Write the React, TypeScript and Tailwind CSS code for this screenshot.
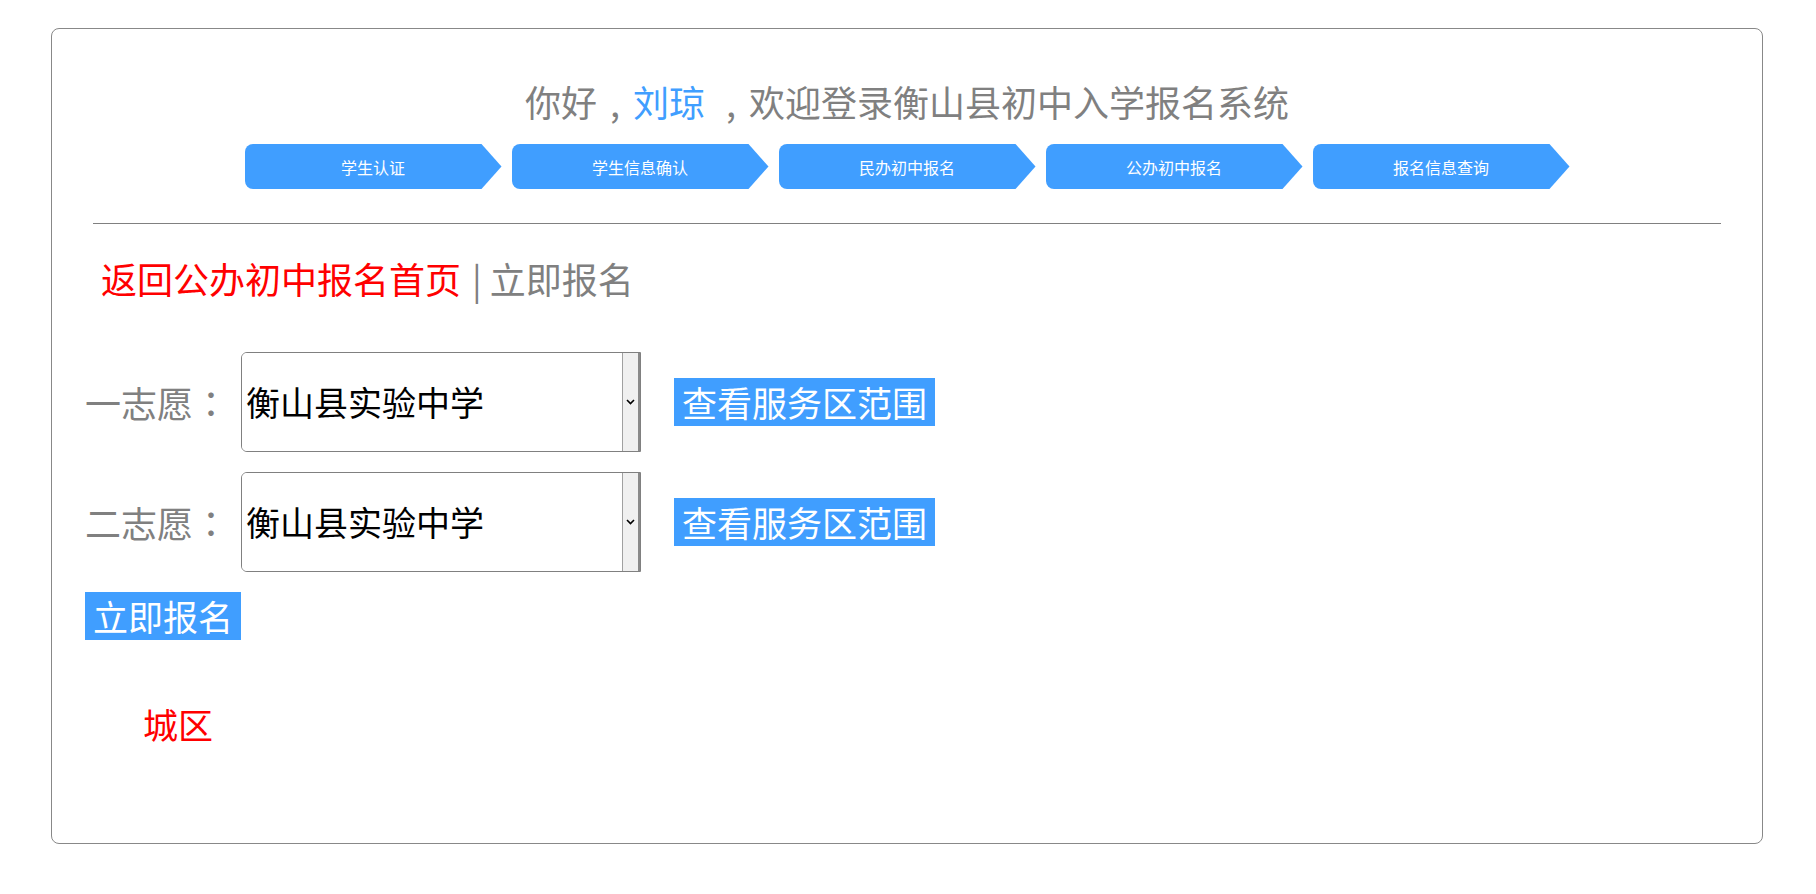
const steps = ['学生认证', '学生信息确认', '民办初中报名', '公办初中报名', '报名信息查询']

// full-width comma with the mark centred at the baseline, as in the reference font
function Comma() {
  return <span className="inline-block w-[1em] text-center">,</span>
}

// centred full-width colon
function Colon() {
  return <span className="font-['Noto_Sans_CJK_TC',sans-serif]">：</span>
}

function StepTab({ label }: { label: string }) {
  return (
    <div className="flex h-[45px] w-[257px] items-center justify-center rounded-l-[8px] bg-[#409eff] text-[16px] leading-[16px] text-white [clip-path:polygon(0_0,calc(100%_-_20px)_0,100%_50%,calc(100%_-_20px)_100%,0_100%)]">
      {label}
    </div>
  )
}

function SchoolSelect() {
  return (
    <div className="flex h-[100px] w-[400px] overflow-hidden rounded-l-[6px] border border-[#808080]">
      <select
        defaultValue="衡山县实验中学"
        className="h-full flex-1 appearance-none bg-white pl-[4px] text-[34px] leading-[34px] text-black outline-none"
      >
        <option>衡山县实验中学</option>
      </select>
      {/* Dropdown arrow box */}
      <div className="flex w-[18px] items-center justify-center border-l border-[#a0a0a0] border-r-2 border-r-[#8a8a8a] bg-[#f0f0f0]">
        <svg width="9" height="6" viewBox="0 0 9 6">
          <path d="M1 1l3.5 3.5L8 1" fill="none" stroke="#000" strokeWidth="1.6" />
        </svg>
      </div>
    </div>
  )
}

function ChoiceRow({ label }: { label: string }) {
  return (
    <div className="flex items-center">
      <span className="w-[156px] text-[36px] leading-[36px] text-[#808080]">
        {label}
        <Colon />
      </span>
      <SchoolSelect />
      <button className="ml-[33px] h-[48px] bg-[#409eff] px-[8px] text-[35px] leading-[48px] text-white">
        查看服务区范围
      </button>
    </div>
  )
}

export default function App() {
  return (
    <div className="min-h-[894px] bg-white pt-[28px] font-['Noto_Sans_CJK_SC','Noto_Sans',sans-serif]">
      <div className="ml-[51px] flex h-[816px] w-[1712px] flex-col rounded-[8px] border border-[#888888] pt-[54px]">
        <h1 className="text-center text-[36px] leading-[36px] text-[#808080]">
          你好<Comma />
          <span className="text-[#409eff]">刘琼</span> <Comma />欢迎登录衡山县初中入学报名系统
        </h1>

        <div className="mt-[25px] flex justify-center gap-[10px]">
          {steps.map(s => (
            <StepTab key={s} label={s} />
          ))}
        </div>

        <hr className="mx-[41px] mt-[34px] border-t border-[#808080]" />

        <div className="mt-[36px] pl-[49px] text-[36px] leading-[36px]">
          <a className="text-[#ff0000]">返回公办初中报名首页</a>
          <span className="pl-[3px] text-[#808080]"> | 立即报名</span>
        </div>

        <div className="mt-[56px] flex flex-col items-start gap-[20px] pl-[33px]">
          <ChoiceRow label="一志愿" />
          <ChoiceRow label="二志愿" />
          <button className="h-[48px] bg-[#409eff] px-[8px] text-[35px] leading-[48px] text-white">立即报名</button>
        </div>

        <div className="mt-[66px] pl-[91px] text-[35px] leading-[35px] text-[#ff0000]">城区</div>
      </div>
    </div>
  )
}
